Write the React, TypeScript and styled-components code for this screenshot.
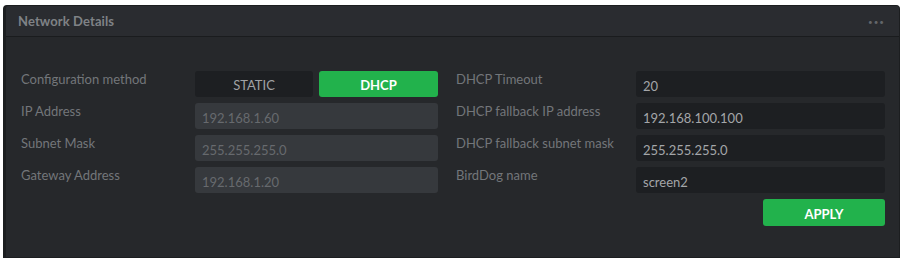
import React from "react";
import styled, { createGlobalStyle } from "styled-components";

const Global = createGlobalStyle`
  html, body { margin: 0; padding: 0; background: #ffffff; }
  body { font-family: Lato, "Noto Sans", sans-serif; }
`;

const Panel = styled.section`
  margin: 5px 7px 0 3px;
  height: 253px;
  box-sizing: border-box;
  background: #26282b;
  border: 1px solid #1c1e20;
  border-left: 3px solid #1c1e20;
  border-radius: 4px 4px 0 0;
  display: flex;
  flex-direction: column;
`;

const Header = styled.header`
  height: 31px;
  box-sizing: border-box;
  background: #2a2c30;
  border-bottom: 1px solid #1a1c1e;
  display: flex;
  align-items: center;
  justify-content: space-between;
  padding: 0 14px 0 12px;
  border-radius: 3px 3px 0 0;
`;

const Title = styled.h2`
  margin: 0;
  font-size: 13px;
  font-weight: 700;
  color: #7f8286;
  letter-spacing: 0.1px;
`;

const Dots = styled.span`
  color: #63666a;
  font-size: 8px;
  letter-spacing: 1px;
  padding-top: 2px;
`;

const Body = styled.div`
  display: flex;
  gap: 18px;
  padding: 34px 15px 0 15px;
`;

const Column = styled.div<{ $label: number; $control: number }>`
  display: grid;
  grid-template-columns: ${(p) => p.$label}px ${(p) => p.$control}px;
  grid-auto-rows: 26px;
  row-gap: 6px;
`;

const Label = styled.div`
  font-size: 13px;
  color: #73767a;
  line-height: 16px;
  white-space: nowrap;
`;

const Field = styled.div<{ $variant: "disabled" | "active" }>`
  box-sizing: border-box;
  height: 26px;
  border-radius: 3px;
  padding: 3px 7px 0;
  display: flex;
  align-items: center;
  font-size: 13px;
  background: ${(p) => (p.$variant === "disabled" ? "#36393d" : "#1d1f22")};
  color: ${(p) => (p.$variant === "disabled" ? "#676a6e" : "#a4a6a9")};
`;

const Toggle = styled.div`
  display: grid;
  grid-template-columns: 118px 119px;
  column-gap: 6px;
`;

const ToggleButton = styled.button<{ $on?: boolean }>`
  height: 26px;
  border: none;
  border-radius: 3px;
  font-family: inherit;
  font-size: 13px;
  padding: 2px 0 0;
  font-weight: ${(p) => (p.$on ? 700 : 400)};
  background: ${(p) => (p.$on ? "#22b24c" : "#1d1f22")};
  color: ${(p) => (p.$on ? "#ffffff" : "#a0a2a5")};
`;

const Spacer = styled.div``;

const Apply = styled.button`
  justify-self: end;
  width: 122px;
  height: 27px;
  border: none;
  border-radius: 3px;
  background: #22b24c;
  color: #ffffff;
  font-family: inherit;
  font-weight: 700;
  font-size: 13px;
  padding: 2px 0 0;
`;

const leftRows = [
  { label: "IP Address", value: "192.168.1.60" },
  { label: "Subnet Mask", value: "255.255.255.0" },
  { label: "Gateway Address", value: "192.168.1.20" },
];

const rightRows = [
  { label: "DHCP Timeout", value: "20" },
  { label: "DHCP fallback IP address", value: "192.168.100.100" },
  { label: "DHCP fallback subnet mask", value: "255.255.255.0" },
  { label: "BirdDog name", value: "screen2" },
];

export default function App() {
  return (
    <>
      <Global />
      <Panel>
        <Header>
          <Title>Network Details</Title>
          <Dots>•••</Dots>
        </Header>
        <Body>
          <Column $label={174} $control={243}>
            <Label>Configuration method</Label>
            <Toggle>
              <ToggleButton>STATIC</ToggleButton>
              <ToggleButton $on>DHCP</ToggleButton>
            </Toggle>
            {leftRows.map((r) => (
              <React.Fragment key={r.label}>
                <Label>{r.label}</Label>
                <Field $variant="disabled">{r.value}</Field>
              </React.Fragment>
            ))}
          </Column>
          <Column $label={180} $control={249}>
            {rightRows.map((r) => (
              <React.Fragment key={r.label}>
                <Label>{r.label}</Label>
                <Field $variant="active">{r.value}</Field>
              </React.Fragment>
            ))}
            <Spacer />
            <Apply>APPLY</Apply>
          </Column>
        </Body>
      </Panel>
    </>
  );
}
